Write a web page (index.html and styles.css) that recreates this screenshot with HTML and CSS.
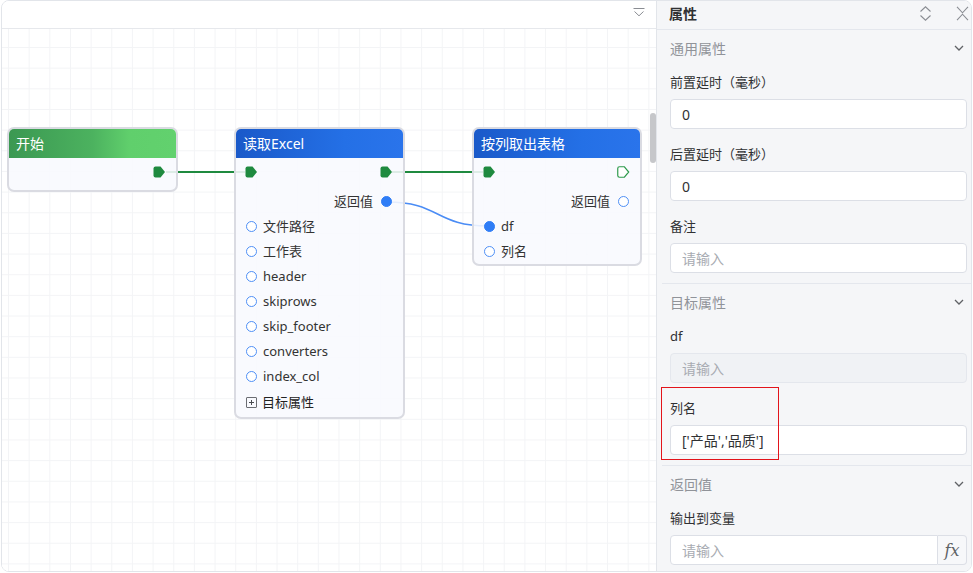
FILE: index.html
```html
<!DOCTYPE html>
<html lang="zh-CN">
<head>
<meta charset="utf-8">
<title>流程编辑</title>
<link rel="stylesheet" href="styles.css">
</head>
<body>
<div class="app">
  <section class="canvas">
    <div class="canvas-bar">
      <svg class="bar-icon" width="12" height="9" viewBox="0 0 12 9"><path d="M0.5 0.5H11.5" stroke="#8a8d93" stroke-width="1"/><path d="M1.5 3.5L6 7.8L10.5 3.5" fill="none" stroke="#8a8d93" stroke-width="1"/></svg>
    </div>
    <div class="board">
      <svg class="edges" width="654" height="542" viewBox="0 0 654 542">
        <path d="M164 143H243" stroke="#1f8a3f" stroke-width="2" fill="none"/>
        <path d="M390 143H481" stroke="#1f8a3f" stroke-width="2" fill="none"/>
        <path d="M385 173C438 173 433 197 486 197" stroke="#4a8cf5" stroke-width="1.5" fill="none"/>
      </svg>

      <div class="node node-start">
        <div class="node-head head-green">开始</div>
        <div class="node-body body-start">
          <div class="port-row end">
            <span class="slot"><svg width="13" height="12" viewBox="0 0 13 12"><path d="M2.5 0.5H7.5L12 6L7.5 11.5H2.5Q0.5 11.5 0.5 9.5V2.5Q0.5 0.5 2.5 0.5Z" fill="#1f8a3f"/></svg></span>
          </div>
        </div>
      </div>

      <div class="node node-excel">
        <div class="node-head head-blue">读取Excel</div>
        <div class="node-body body-excel">
          <div class="port-row">
            <span class="slot"><svg width="13" height="12" viewBox="0 0 13 12"><path d="M2.5 0.5H7.5L12 6L7.5 11.5H2.5Q0.5 11.5 0.5 9.5V2.5Q0.5 0.5 2.5 0.5Z" fill="#1f8a3f"/></svg></span>
            <span class="slot"><svg width="13" height="12" viewBox="0 0 13 12"><path d="M2.5 0.5H7.5L12 6L7.5 11.5H2.5Q0.5 11.5 0.5 9.5V2.5Q0.5 0.5 2.5 0.5Z" fill="#1f8a3f"/></svg></span>
          </div>
          <div class="row ret-row"><span>返回值</span><span class="slot"><span class="dot filled"></span></span></div>
          <div class="row"><span class="slot"><span class="dot"></span></span><span class="param">文件路径</span></div>
          <div class="row"><span class="slot"><span class="dot"></span></span><span class="param">工作表</span></div>
          <div class="row"><span class="slot"><span class="dot"></span></span><span class="param">header</span></div>
          <div class="row"><span class="slot"><span class="dot"></span></span><span class="param">skiprows</span></div>
          <div class="row"><span class="slot"><span class="dot"></span></span><span class="param">skip_footer</span></div>
          <div class="row"><span class="slot"><span class="dot"></span></span><span class="param">converters</span></div>
          <div class="row"><span class="slot"><span class="dot"></span></span><span class="param">index_col</span></div>
          <div class="row more-row"><span class="plus-box"></span><span class="more-text">目标属性</span></div>
        </div>
      </div>

      <div class="node node-table">
        <div class="node-head head-blue">按列取出表格</div>
        <div class="node-body">
          <div class="port-row">
            <span class="slot"><svg width="13" height="12" viewBox="0 0 13 12"><path d="M2.5 0.5H7.5L12 6L7.5 11.5H2.5Q0.5 11.5 0.5 9.5V2.5Q0.5 0.5 2.5 0.5Z" fill="#1f8a3f"/></svg></span>
            <span class="slot"><svg width="13" height="12" viewBox="0 0 13 12"><path d="M2.5 0.75H7.4L11.7 6L7.4 11.25H2.5Q0.75 11.25 0.75 9.5V2.5Q0.75 0.75 2.5 0.75Z" fill="#fff" stroke="#2e9a4c" stroke-width="1.2"/></svg></span>
          </div>
          <div class="row ret-row"><span>返回值</span><span class="slot"><span class="dot"></span></span></div>
          <div class="row"><span class="slot"><span class="dot filled"></span></span><span class="param">df</span></div>
          <div class="row"><span class="slot"><span class="dot"></span></span><span class="param">列名</span></div>
        </div>
      </div>

      <div class="scrollbar"></div>
    </div>
  </section>

  <aside class="panel">
    <header class="panel-head">
      <span class="panel-title">属性</span>
      <span class="head-icons">
        <svg width="13" height="15" viewBox="0 0 13 15"><path d="M1.5 5.5L6.5 0.8L11.5 5.5M1.5 9.5L6.5 14.2L11.5 9.5" fill="none" stroke="#8a8d93" stroke-width="1.1"/></svg>
        <svg width="13" height="15" viewBox="0 0 13 15"><path d="M1 0.8L6.5 6.8L12 0.8M1 14.2L6.5 8.2L12 14.2" fill="none" stroke="#8a8d93" stroke-width="1.1"/></svg>
      </span>
    </header>
    <div class="panel-body">
      <section class="group">
        <div class="group-head"><span>通用属性</span><svg width="10" height="6" viewBox="0 0 10 6"><path d="M1 1L5 5L9 1" fill="none" stroke="#606266" stroke-width="1.3"/></svg></div>
        <div class="group-body">
          <div class="field"><div class="label">前置延时（毫秒）</div><input class="input" value="0"></div>
          <div class="field"><div class="label">后置延时（毫秒）</div><input class="input" value="0"></div>
          <div class="field"><div class="label">备注</div><input class="input" placeholder="请输入"></div>
        </div>
      </section>
      <section class="group">
        <div class="group-head"><span>目标属性</span><svg width="10" height="6" viewBox="0 0 10 6"><path d="M1 1L5 5L9 1" fill="none" stroke="#606266" stroke-width="1.3"/></svg></div>
        <div class="group-body">
          <div class="field"><div class="label">df</div><input class="input" placeholder="请输入" disabled></div>
          <div class="field marked"><div class="label">列名</div><input class="input" value="['产品','品质']"><span class="mark"></span></div>
        </div>
      </section>
      <section class="group">
        <div class="group-head"><span>返回值</span><svg width="10" height="6" viewBox="0 0 10 6"><path d="M1 1L5 5L9 1" fill="none" stroke="#606266" stroke-width="1.3"/></svg></div>
        <div class="group-body">
          <div class="field"><div class="label">输出到变量</div>
            <div class="input-group"><input class="input" placeholder="请输入"><span class="suffix">fx</span></div>
          </div>
        </div>
      </section>
    </div>
  </aside>
</div>
</body>
</html>
```

FILE: styles.css
```css
* { box-sizing: border-box; }
html, body { margin: 0; padding: 0; background: #fff; }
body {
  font-family: "Noto Sans", "Noto Sans CJK SC", sans-serif;
  color: #303133;
}

.app {
  margin-left: 1px;
  width: 971px;
  height: 572px;
  display: flex;
  border: 1px solid #e2e5ea;
  border-radius: 8px;
  overflow: hidden;
}

/* ---------- canvas ---------- */
.canvas {
  flex: 0 0 655px;
  display: flex;
  flex-direction: column;
  border-right: 1px solid #e2e5ea;
  background: #fff;
}
.canvas-bar {
  height: 28px;
  border-bottom: 1px solid #e6e8ec;
  display: flex;
  align-items: center;
  justify-content: flex-end;
  padding: 0 11px 4px 0;
}

.board {
  position: relative;
  flex: 1;
  overflow: hidden;
  background-color: #fff;
  background-image:
    linear-gradient(to right, #f3f4f6 1px, transparent 1px),
    linear-gradient(to bottom, #f3f4f6 1px, transparent 1px);
  background-size: 20.67px 20.67px;
  background-position: 6px 18px;
}
.edges { position: absolute; left: 0; top: 0; }

.scrollbar {
  position: absolute;
  right: 0;
  top: 84px;
  width: 6px;
  height: 50px;
  border-radius: 3px;
  background: #c6c7ca;
}

/* ---------- nodes ---------- */
.node {
  position: absolute;
  border: 2px solid #dadbe2;
  border-radius: 7px;
  background: rgba(248, 249, 254, 0.88);
  overflow: hidden;
  font-size: 13px;
  color: #333;
  line-height: 1;
}
.node-start { left: 5px; top: 98px; width: 171px; }
.node-excel { left: 232px; top: 98px; width: 171px; }
.node-table { left: 470px; top: 98px; width: 170px; }

.node-head {
  height: 29px;
  line-height: 29px;
  padding-left: 7px;
  color: #fff;
  font-size: 14px;
}
.head-green { background: linear-gradient(90deg, #3b9852 0%, #4cb25f 50%, #60cf6c 72%, #62d16e 100%); }
.head-blue { background: linear-gradient(90deg, #1a59c9 0%, #2470e6 65%, #2a74eb 100%); }

.node-body { padding: 0 10px 0 9px; }
.body-start { padding-bottom: 4px; }
.body-excel { padding-bottom: 2px; }

.port-row {
  height: 28px;
  display: flex;
  align-items: center;
  justify-content: space-between;
}
.port-row.end { justify-content: flex-end; }

.row {
  height: 25px;
  display: flex;
  align-items: center;
}
.ret-row {
  margin-top: 3px;
  justify-content: flex-end;
  gap: 7px;
}
.slot {
  flex: none;
  width: 13px;
  height: 12px;
  display: flex;
  align-items: center;
  justify-content: center;
}
.slot svg { display: block; }
.dot {
  flex: none;
  width: 11px;
  height: 11px;
  border-radius: 50%;
  border: 1.3px solid #4f8ff5;
  background: #fff;
}
.dot.filled { background: #2f7df6; border-color: #2f7df6; }
.param { margin-left: 5px; }

.more-row { height: 26px; padding-left: 1px; }
.plus-box {
  position: relative;
  width: 11px;
  height: 11px;
  border: 1px solid #6b6d72;
  border-radius: 1px;
}
.plus-box::before, .plus-box::after {
  content: "";
  position: absolute;
  background: #4a4c50;
}
.plus-box::before { left: 2px; top: 4px; width: 5px; height: 1px; }
.plus-box::after { left: 4px; top: 2px; width: 1px; height: 5px; }
.more-text { margin-left: 5px; color: #222; }

/* ---------- panel ---------- */
.panel {
  flex: 1;
  background: #f5f6f8;
  display: flex;
  flex-direction: column;
  overflow: hidden;
}
.panel-head {
  flex: none;
  height: 29px;
  border-bottom: 1px solid #e4e7ed;
  display: flex;
  align-items: center;
  justify-content: space-between;
  padding: 0 2px 4px 12px;
}
.panel-title { font-size: 14px; font-weight: 700; color: #303133; }
.head-icons { display: flex; gap: 24px; align-items: center; }
.head-icons svg { display: block; }

.panel-body { flex: 1; }
.group { margin-left: 5px; }
.group + .group { border-top: 1px solid #e4e7ed; }
.group-head {
  height: 36px;
  display: flex;
  align-items: center;
  justify-content: space-between;
  padding: 0 7px 0 8px;
  font-size: 14px;
  color: #909399;
}
.group-body {
  padding: 0 4px 10px 8px;
  display: flex;
  flex-direction: column;
  gap: 9px;
}
.field { position: relative; }
.label {
  height: 33px;
  line-height: 33px;
  font-size: 13px;
  color: #303133;
}
.input {
  display: block;
  width: 100%;
  height: 30px;
  border: 1px solid #dcdfe6;
  border-radius: 4px;
  background: #fff;
  padding: 0 11px;
  font-family: "Noto Sans", "Noto Sans CJK SC", sans-serif;
  font-size: 14px;
  color: #303133;
  outline: none;
}
.input::placeholder { color: #a8abb2; }
.input:disabled { background: #f0f2f5; border-color: #e4e7ed; }

.mark {
  position: absolute;
  left: -9px;
  top: -5px;
  width: 118px;
  height: 73px;
  border: 1px solid #e3141b;
  pointer-events: none;
}

.input-group { display: flex; }
.input-group .input { flex: 1; border-radius: 4px 0 0 4px; }
.suffix {
  flex: none;
  width: 29px;
  height: 30px;
  border: 1px solid #dcdfe6;
  border-left: none;
  border-radius: 0 4px 4px 0;
  background: #f7f8fa;
  display: flex;
  align-items: center;
  justify-content: center;
  font-family: "DejaVu Serif", "Liberation Serif", serif;
  font-style: italic;
  font-size: 16px;
  color: #5f6266;
}
```
